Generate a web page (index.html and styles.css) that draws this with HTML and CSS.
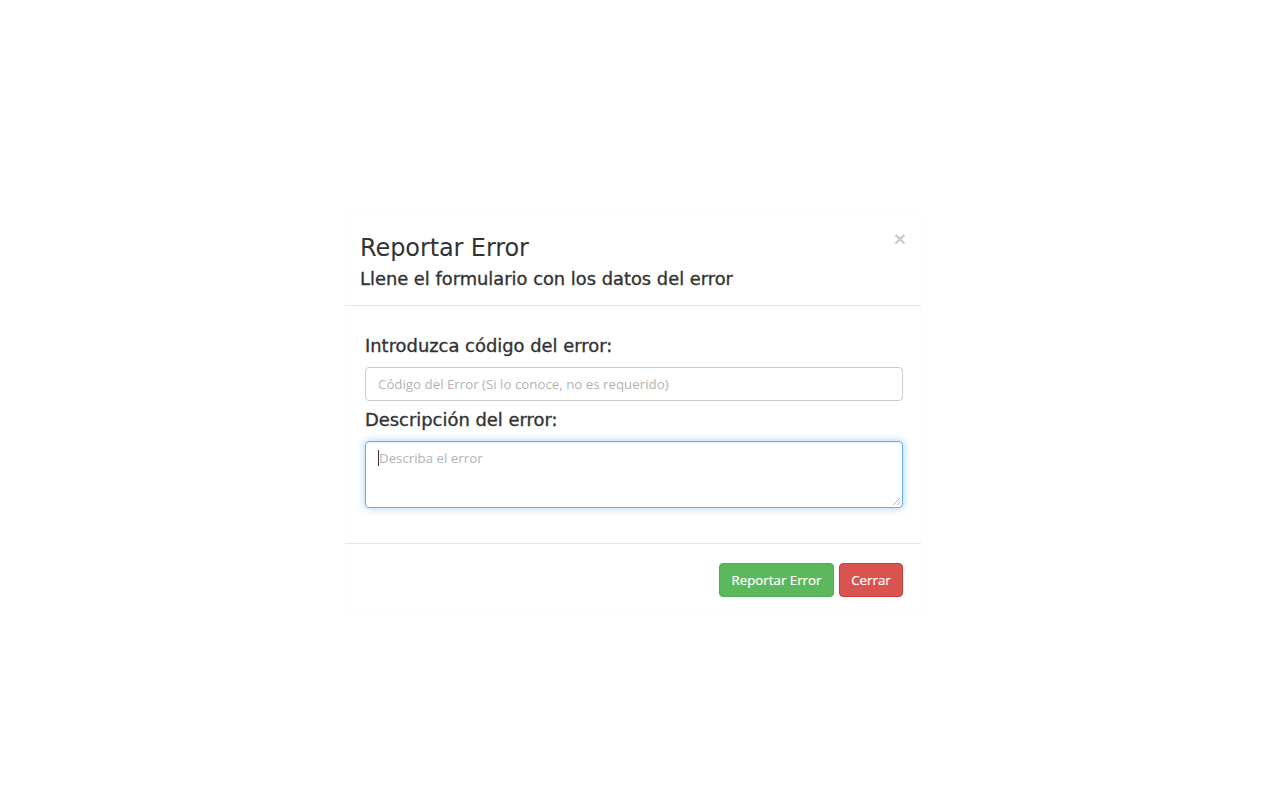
FILE: index.html
```html
<!DOCTYPE html>
<html lang="es">
<head>
<meta charset="utf-8">
<title>Reportar Error</title>
<link rel="stylesheet" href="styles.css">
</head>
<body>
<div class="overlay">
  <div class="modal">
    <div class="modal-header">
      <button class="close" type="button">×</button>
      <h4 class="modal-title">Reportar Error</h4>
      <h5 class="modal-subtitle">Llene el formulario con los datos del error</h5>
    </div>
    <div class="modal-body">
      <label class="label" for="codigo">Introduzca código del error:</label>
      <input class="input" id="codigo" type="text" placeholder="Código del Error (Si lo conoce, no es requerido)">
      <label class="label" for="desc">Descripción del error:</label>
      <div class="textarea focused">
        <span class="caret"></span><span class="placeholder">Describa el error</span>
        <span class="grip"></span>
      </div>
    </div>
    <div class="modal-footer">
      <button class="btn btn-success" type="button">Reportar Error</button>
      <button class="btn btn-danger" type="button">Cerrar</button>
    </div>
  </div>
</div>
</body>
</html>
```

FILE: styles.css
```css
html, body {
  margin: 0;
  padding: 0;
  background: #ffffff;
  height: 100%;
}

body {
  font-family: "DejaVu Sans", sans-serif;
  color: #333333;
}

.overlay {
  padding: 216px 0 0 345px;
}

.modal {
  width: 576px;
  background: #ffffff;
  box-shadow: 0 0 3px rgba(0, 0, 0, 0.04);
}

.modal-header {
  position: relative;
  padding: 17px 15px 0 15px;
  height: 72px;
  border-bottom: 1px solid #e5e5e5;
}

.close {
  position: absolute;
  top: 13px;
  right: 15px;
  border: 0;
  background: transparent;
  padding: 0;
  font-family: "Liberation Sans", sans-serif;
  font-size: 21px;
  font-weight: bold;
  line-height: 20px;
  color: #000;
  opacity: 0.2;
}

.modal-title {
  margin: 0;
  font-size: 24px;
  font-weight: normal;
  line-height: 30px;
  letter-spacing: -0.1px;
}

.modal-subtitle {
  margin: 0;
  font-size: 17.85px;
  font-weight: normal;
  line-height: 32px;
  -webkit-text-stroke: 0.35px #333333;
}

.modal-body {
  padding: 26px 18px 35px 20px;
  display: flex;
  flex-direction: column;
}

.label {
  display: block;
  font-size: 17.9px;
  font-weight: normal;
  line-height: 28px;
  -webkit-text-stroke: 0.35px #333333;
  margin-bottom: 7px;
}

.input {
  box-sizing: border-box;
  height: 34px;
  width: 100%;
  padding: 6px 12px;
  border: 1px solid #cccccc;
  border-radius: 4px;
  font-family: "Open Sans", sans-serif;
  font-size: 13.3px;
  color: #555;
  margin-bottom: 5px;
  outline: none;
}

.input::placeholder {
  color: #b3b3b3;
}

.textarea {
  position: relative;
  box-sizing: border-box;
  height: 67px;
  width: 100%;
  padding: 7px 12px;
  border: 1px solid #66afe9;
  border-radius: 4px;
  box-shadow: inset 0 1px 1px rgba(0, 0, 0, 0.075), 0 0 8px rgba(102, 175, 233, 0.6);
  font-family: "Open Sans", sans-serif;
  font-size: 13.3px;
  line-height: 18px;
  display: flex;
  align-items: flex-start;
}

.caret {
  display: inline-block;
  width: 1px;
  height: 16px;
  margin-top: 1px;
  background: #333;
}

.placeholder {
  color: #b3b3b3;
}

.grip {
  position: absolute;
  right: 2px;
  bottom: 2px;
  width: 7px;
  height: 7px;
  background: linear-gradient(135deg, transparent 45%, #bbb 45%, #bbb 55%, transparent 55%, transparent 75%, #bbb 75%, #bbb 85%, transparent 85%);
}

.modal-footer {
  border-top: 1px solid #e5e5e5;
  padding: 19px 18px 18px 18px;
  display: flex;
  justify-content: flex-end;
  gap: 5px;
}

.btn {
  height: 34px;
  padding: 0 6px;
  border: 1px solid transparent;
  border-radius: 4px;
  font-family: "Open Sans", sans-serif;
  font-size: 13.3px;
  color: #ffffff;
  line-height: 32px;
  white-space: nowrap;
  text-align: center;
  -webkit-text-stroke: 0.2px #ffffff;
}

.btn-success {
  background: #5cb85c;
  border-color: #4cae4c;
  width: 115px;
}

.btn-danger {
  background: #d9534f;
  border-color: #d43f3a;
  width: 64px;
}
```
